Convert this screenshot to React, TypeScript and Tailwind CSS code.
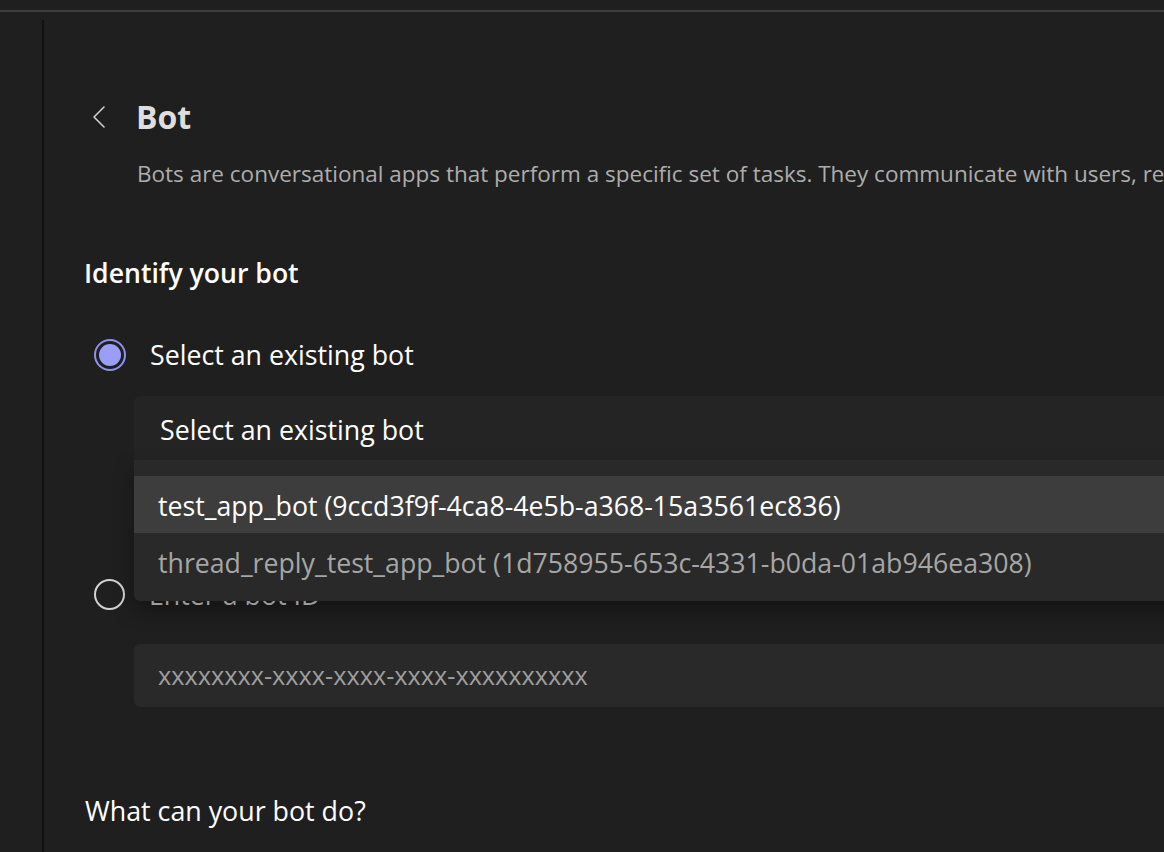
const font = { fontFamily: '"Open Sans", "Noto Sans", sans-serif' };

const Radio = ({ checked }: { checked?: boolean }) =>
  checked ? (
    <span className="flex h-[32px] w-[32px] shrink-0 items-center justify-center rounded-full border-2 border-[#8e92ec]">
      <span className="h-[22px] w-[22px] rounded-full bg-[#9a9ef6]" />
    </span>
  ) : (
    <span className="h-[31px] w-[31px] shrink-0 rounded-full border-2 border-[#d2d2d2]" />
  );

const App = () => {
  return (
    <div className="h-[852px] w-[1164px] overflow-hidden bg-[#1f1f1f] text-white" style={font}>
      <div className="h-[10px]" />
      <div className="h-[2px] bg-[#3d3d3d]" />
      <div className="flex h-[840px] pt-[8px]">
        <div className="w-[42px] shrink-0" />
        <main className="relative flex-1 border-l-2 border-[#111111] pl-[41px] pt-[77px]">
          <div className="flex h-[40px] items-center">
            <svg className="ml-[8px] h-[22px] w-[12px]" viewBox="0 0 12 22" fill="none">
              <path d="M11 1 1 11l10 10" stroke="#d4d4d4" strokeWidth="1.5" strokeLinecap="round" strokeLinejoin="round" />
            </svg>
            <h1 className="ml-[31px] text-[32px] font-bold leading-[40px] text-[#dedede]">Bot</h1>
          </div>
          <p className="ml-[52px] mt-[21px] whitespace-nowrap text-[22.5px] leading-[32px] text-[#adadad]">
            Bots are conversational apps that perform a specific set of tasks. They communicate with users, respond to their questions, and proactively notify them about changes.
          </p>

          <h2 className="-ml-px mt-[65px] text-[26.6px] font-semibold leading-[36px]">Identify your bot</h2>

          <label className="mt-[44px] flex h-[40px] items-center gap-[24px] pl-[9px]">
            <Radio checked />
            <span className="text-[26.75px]">Select an existing bot</span>
          </label>

          <div className="relative ml-[49px] mt-[21px] w-[1100px]">
            <div className="flex h-[64px] items-center rounded-t-[6px] bg-[#242424] pl-[26px] pt-[4px] text-[26.75px]">
              Select an existing bot
            </div>
            <ul className="absolute left-0 top-full z-10 w-full rounded-b-[6px] bg-[#292929] pb-[11px] pt-[16px] text-[26.7px] shadow-[0_10px_20px_rgba(0,0,0,0.35)]">
              <li className="flex h-[57px] items-center bg-[#3d3d3d] pl-[24px] pt-[4px] text-white">
                test_app_bot (9ccd3f9f-4ca8-4e5b-a368-15a3561ec836)
              </li>
              <li className="flex h-[57px] items-center pl-[24px] pt-[4px] text-[#a6a6a6]">
                thread_reply_test_app_bot (1d758955-653c-4331-b0da-01ab946ea308)
              </li>
            </ul>
          </div>

          <label className="mt-[114px] flex h-[40px] items-center gap-[24px] pl-[9px]">
            <Radio />
            <span className="pt-[2px] text-[26.75px] text-[#d6d6d6]">Enter a bot ID</span>
          </label>

          <div className="ml-[49px] mt-[30px] flex h-[63px] w-[1100px] items-center rounded-[6px] bg-[#292929] pl-[24px] text-[25.3px] text-[#9e9e9e]">
            xxxxxxxx-xxxx-xxxx-xxxx-xxxxxxxxxx
          </div>

          <h2 className="mt-[86px] text-[26.8px] leading-[36px]">What can your bot do?</h2>
        </main>
      </div>
    </div>
  );
};

export default App;
